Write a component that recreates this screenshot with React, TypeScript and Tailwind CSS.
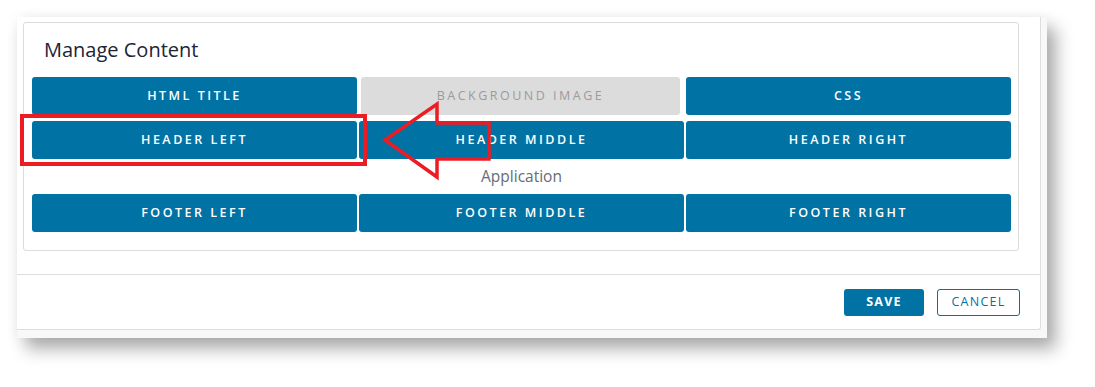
import React from "react";

const blueBtn =
  "h-[38px] pt-px rounded-[3px] bg-[#0072a3] text-white text-[12.5px] font-semibold tracking-[0.2em] flex items-center justify-center";

function Btn({ text }: { text: string }) {
  return <div className={blueBtn}>{text}</div>;
}

function Annotation() {
  return (
    <svg
      className="absolute left-0 top-0 pointer-events-none"
      width={1095}
      height={387}
      viewBox="0 0 1095 387"
    >
      <rect
        x={22}
        y={116}
        width={343}
        height={48}
        fill="none"
        stroke="#ed1c24"
        strokeWidth={4}
      />
      <polygon
        points="385,140 437,104 437,123 489,123 489,159 437,159 437,177"
        fill="none"
        stroke="#ed1c24"
        strokeWidth={3.5}
        strokeLinejoin="miter"
      />
    </svg>
  );
}

export default function App() {
  return (
    <div
      className="relative w-[1095px] h-[387px] bg-white pt-[17px] pl-[17px] overflow-hidden"
      style={{ fontFamily: '"Open Sans", "Liberation Sans", sans-serif' }}
    >
      <div className="w-[1030px] h-[321px] bg-[#f8f8f8] shadow-[0_0_14px_rgba(0,0,0,0.05),9px_11px_16px_rgba(0,0,0,0.32)]">
        <div className="w-[1024px] h-[313px] bg-white border-r border-b border-[#dedede] rounded-br-[3px] flex flex-col">
          {/* content */}
          <div className="h-[258px] border-b border-[#dddddd] pt-[5px] pl-[6px] pr-[21px]">
            <div className="h-[229px] border border-[#dcdcdc] rounded-[3px] pt-[15px] pl-[8px] pr-[7px] pb-[17px] flex flex-col">
              <h2 className="h-[24px] leading-[24px] text-[20px] text-[#1b2536] pl-[12px] mb-[15px]">
                Manage Content
              </h2>
              <div className="grid grid-cols-3 gap-x-[2px] gap-y-[6px]">
                <Btn text="HTML TITLE" />
                <div className="h-[38px] pt-px ml-[2px] mr-[4px] rounded-[3px] bg-[#dcdcdc] text-[#9b9b9b] text-[12.5px] font-medium tracking-[0.2em] flex items-center justify-center">
                  BACKGROUND IMAGE
                </div>
                <Btn text="CSS" />
                <Btn text="HEADER LEFT" />
                <Btn text="HEADER MIDDLE" />
                <Btn text="HEADER RIGHT" />
              </div>
              <div className="h-[35px] flex items-center justify-center text-[15.5px] text-[#666c74]">
                Application
              </div>
              <div className="grid grid-cols-3 gap-x-[2px]">
                <Btn text="FOOTER LEFT" />
                <Btn text="FOOTER MIDDLE" />
                <Btn text="FOOTER RIGHT" />
              </div>
            </div>
          </div>
          {/* footer */}
          <div className="flex-1 flex items-start justify-end pt-[14px] pr-[20px] gap-[13px]">
            <div className="w-[80px] h-[27px] rounded-[3px] bg-[#0072a3] text-white text-[12.5px] font-bold tracking-[0.1em] flex items-center justify-center">
              SAVE
            </div>
            <div className="w-[83px] h-[27px] rounded-[3px] border border-[#0072a3] text-[#0072a3] text-[12.5px] tracking-[0.1em] flex items-center justify-center">
              CANCEL
            </div>
          </div>
        </div>
      </div>
      <Annotation />
    </div>
  );
}
